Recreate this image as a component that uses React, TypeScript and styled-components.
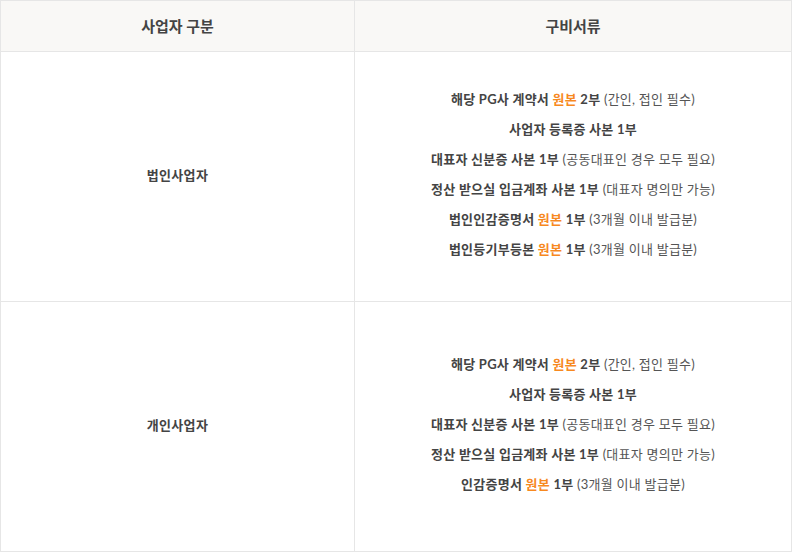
import React from 'react';
import styled, { createGlobalStyle } from 'styled-components';

type Item = { main: string; original?: boolean; count: string; note: string };

const corporate: Item[] = [
  { main: '해당 PG사 계약서', original: true, count: '2부', note: '(간인, 접인 필수)' },
  { main: '사업자 등록증 사본', count: '1부', note: '' },
  { main: '대표자 신분증 사본', count: '1부', note: '(공동대표인 경우 모두 필요)' },
  { main: '정산 받으실 입금계좌 사본', count: '1부', note: '(대표자 명의만 가능)' },
  { main: '법인인감증명서', original: true, count: '1부', note: '(3개월 이내 발급분)' },
  { main: '법인등기부등본', original: true, count: '1부', note: '(3개월 이내 발급분)' },
];

const personal: Item[] = [
  { main: '해당 PG사 계약서', original: true, count: '2부', note: '(간인, 접인 필수)' },
  { main: '사업자 등록증 사본', count: '1부', note: '' },
  { main: '대표자 신분증 사본', count: '1부', note: '(공동대표인 경우 모두 필요)' },
  { main: '정산 받으실 입금계좌 사본', count: '1부', note: '(대표자 명의만 가능)' },
  { main: '인감증명서', original: true, count: '1부', note: '(3개월 이내 발급분)' },
];

const rows = [
  { type: '법인사업자', items: corporate },
  { type: '개인사업자', items: personal },
];

export default function App() {
  return (
    <>
      <GlobalStyle />
      <Table>
        <thead>
          <tr>
            <HeadCell $width={354}>사업자 구분</HeadCell>
            <HeadCell>구비서류</HeadCell>
          </tr>
        </thead>
        <tbody>
          {rows.map((row) => (
            <tr key={row.type}>
              <TypeCell>{row.type}</TypeCell>
              <DocCell>
                <DocList>
                  {row.items.map((item, i) => (
                    <DocLine key={i}>
                      {item.main}{' '}
                      {item.original && <Original>원본 </Original>}
                      {item.count}
                      {item.note && <Note> {item.note}</Note>}
                    </DocLine>
                  ))}
                </DocList>
              </DocCell>
            </tr>
          ))}
        </tbody>
      </Table>
    </>
  );
}

const GlobalStyle = createGlobalStyle`
  body {
    margin: 0;
    background: #fff;
    font-family: Lato, "Noto Sans CJK KR", sans-serif;
  }
`;

const Table = styled.table`
  width: 792px;
  border-collapse: collapse;
  table-layout: fixed;
  color: #444;
`;

const HeadCell = styled.th<{ $width?: number }>`
  width: ${(p) => (p.$width ? `${p.$width - 1}px` : 'auto')};
  height: 48px;
  padding: 0 0 2px;
  background: #f9f8f6;
  border: 1px solid #e6e6e6;
  font-size: 15px;
  font-weight: 700;
  color: #444;
  text-align: center;
  vertical-align: middle;
`;

const TypeCell = styled.td`
  height: 244px;
  padding: 0 0 5px;
  border: 1px solid #e6e6e6;
  font-size: 13px;
  letter-spacing: 0.3px;
  font-weight: 700;
  text-align: center;
  vertical-align: middle;
`;

const DocCell = styled.td`
  padding: 0 0 5px;
  border: 1px solid #e6e6e6;
  text-align: center;
  vertical-align: middle;
`;

const DocList = styled.ul`
  list-style: none;
  margin: 0;
  padding: 0;
`;

const DocLine = styled.li`
  font-size: 13px;
  line-height: 30px;
  letter-spacing: 0.25px;
  font-weight: 700;
  color: #444;
`;

const Original = styled.span`
  color: #f7891f;
`;

const Note = styled.span`
  font-weight: 400;
  color: #555;
`;
